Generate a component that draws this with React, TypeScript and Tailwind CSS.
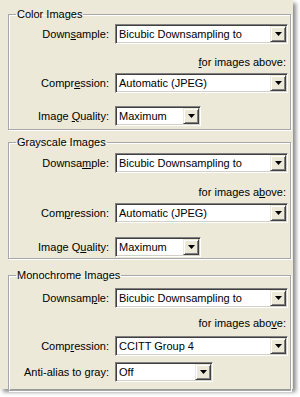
import React from "react";

const Arrow = () => (
  <svg width="7" height="4" viewBox="0 0 7 4">
    <path d="M0 0h7L3.5 4z" fill="#000" />
  </svg>
);

const Select: React.FC<{ value: string; width: string }> = ({ value, width }) => (
  <div
    className={`${width} h-[20px] flex items-center bg-white border border-t-[#808080] border-l-[#808080] border-b-white border-r-white shadow-[inset_1px_1px_0_#404040,inset_-1px_-1px_0_#D4D0C8] p-[1px]`}
  >
    <span className="flex-1 pl-[2px] leading-[13px] whitespace-nowrap">{value}</span>
    <div className="w-[16px] h-[16px] flex items-center justify-center bg-[#ECE9D8] border border-t-[#ECE9D8] border-l-[#ECE9D8] border-b-[#404040] border-r-[#404040] shadow-[inset_1px_1px_0_white,inset_-1px_-1px_0_#808080]">
      <Arrow />
    </div>
  </div>
);

const Row: React.FC<{ label: React.ReactNode; className?: string; children: React.ReactNode }> = ({
  label,
  className,
  children,
}) => (
  <div className={`flex items-center ${className ?? ""}`}>
    <div className="w-[101px] text-right pr-[1px] whitespace-nowrap">{label}</div>
    <div className="ml-[5px]">{children}</div>
  </div>
);

const Group: React.FC<{ title: string; className?: string; children: React.ReactNode }> = ({
  title,
  className,
  children,
}) => (
  <fieldset
    className={`w-[283px] border border-[#A7A6AA] shadow-[inset_1px_1px_0_white,1px_1px_0_white] ${className ?? ""}`}
  >
    <legend className="ml-[7px] px-[1px] leading-[13px]">{title}</legend>
    {children}
  </fieldset>
);

const Above: React.FC<{ className: string; children: React.ReactNode }> = ({ className, children }) => (
  <div className={`text-right pr-[4px] leading-[13px] ${className}`}>{children}</div>
);

export default function App() {
  return (
    <div className="w-[300px] h-[397px] bg-white">
      <div className="w-[293px] h-[389px] bg-[#ECE9D8] shadow-[3px_3px_4px_rgba(0,0,0,0.45)] pl-[8px] pt-[8px] font-['Liberation_Sans',Arial,sans-serif] text-[11px] text-black">
        <Group title="Color Images" className="h-[122px]">
          <Row label={<>Down<u>s</u>ample:</>} className="mt-[3px]">
            <Select value="Bicubic Downsampling to" width="w-[173px]" />
          </Row>
          <Above className="mt-[12px]">
            <u>f</u>or images above:
          </Above>
          <Row label={<>Compr<u>e</u>ssion:</>} className="mt-[4px]">
            <Select value="Automatic (JPEG)" width="w-[173px]" />
          </Row>
          <Row label={<>Image <u>Q</u>uality:</>} className="mt-[13px]">
            <Select value="Maximum" width="w-[86px]" />
          </Row>
        </Group>

        <Group title="Grayscale Images" className="h-[123px] mt-[6px]">
          <Row label={<>Downsa<u>m</u>ple:</>} className="mt-[4px]">
            <Select value="Bicubic Downsampling to" width="w-[173px]" />
          </Row>
          <Above className="mt-[13px]">
            for images a<u>b</u>ove:
          </Above>
          <Row label={<>Com<u>p</u>ression:</>} className="mt-[4px]">
            <Select value="Automatic (JPEG)" width="w-[173px]" />
          </Row>
          <Row label={<>Image Q<u>u</u>ality:</>} className="mt-[14px]">
            <Select value="Maximum" width="w-[86px]" />
          </Row>
        </Group>

        <Group title="Monochrome Images" className="h-[122px] mt-[10px]">
          <Row label={<>Downsam<u>p</u>le:</>} className="mt-[6px]">
            <Select value="Bicubic Downsampling to" width="w-[173px]" />
          </Row>
          <Above className="mt-[9px]">
            for images abo<u>v</u>e:
          </Above>
          <Row label={<>Comp<u>r</u>ession:</>} className="mt-[6px]">
            <Select value="CCITT Group 4" width="w-[173px]" />
          </Row>
          <Row label="Anti-alias to gray:" className="mt-[6px]">
            <Select value="Off" width="w-[98px]" />
          </Row>
        </Group>
      </div>
    </div>
  );
}
